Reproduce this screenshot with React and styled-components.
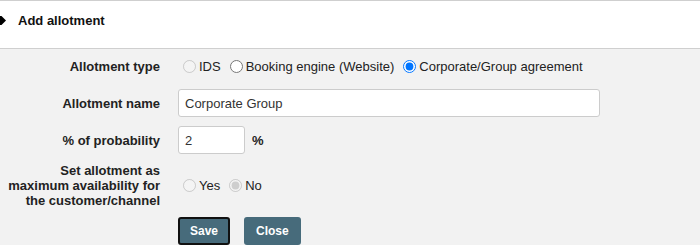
import React from 'react'
import styled, { createGlobalStyle } from 'styled-components'

const GlobalStyle = createGlobalStyle`
    html, body {
        margin: 0;
        padding: 0;
        background: #f2f2f2;
        font-family: "Liberation Sans", Arial, sans-serif;
        font-size: 13px;
        color: #222;
    }
`

const Header = styled.div`
    display: flex;
    align-items: center;
    gap: 12px;
    background: #fff;
    border-top: 1px solid #cfcfcf;
    border-bottom: 1px solid #cfcfcf;
    padding: 12px 0 20px 0;
`

const Title = styled.h3`
    margin: 0;
    font-size: 13px;
    line-height: 15px;
    font-weight: bold;
    color: #111;
`

const Form = styled.div`
    display: grid;
    grid-template-columns: 160px 1fr;
    column-gap: 18px;
    row-gap: 9px;
    align-items: center;
    padding-top: 3px;
`

const Label = styled.div`
    text-align: right;
    font-weight: bold;
    line-height: 15px;
    padding-left: 6px;
`

const Controls = styled.div`
    display: flex;
    align-items: center;
    gap: ${p => p.gap || 4}px;
    min-height: 28px;
    grid-column: ${p => (p.full ? '2' : 'auto')};
`

const Option = styled.label`
    display: inline-flex;
    align-items: center;
    line-height: 15px;
    color: #222;
    input {
        margin: 0 3px 0 5px;
        width: 13px;
        height: 13px;
    }
`

const TextInput = styled.input`
    box-sizing: border-box;
    width: ${p => p.w}px;
    height: 28px;
    border: 1px solid #cccccc;
    border-radius: 3px;
    padding: 0 6px;
    font-family: "Liberation Sans", Arial, sans-serif;
    font-size: 13px;
    color: #333;
    background: #fff;
    outline: none;
`

const Unit = styled.span`
    font-weight: bold;
`

const Button = styled.button`
    height: 28px;
    padding: 0 10px;
    background: #476b7b;
    color: #fff;
    font-family: "Liberation Sans", Arial, sans-serif;
    font-size: 12px;
    font-weight: bold;
    border: 2px solid ${p => (p.focused ? '#111' : '#476b7b')};
    border-radius: 3px;
    cursor: pointer;
`

const Arrow = () => (
    <svg width="6" height="9" viewBox="0 0 6 9">
        <polygon points="0,0 1.5,0 6,4.5 1.5,9 0,9" fill="#000" />
    </svg>
)

const App = () => {
    return (
        <div>
            <GlobalStyle />
            <Header>
                <Arrow />
                <Title>Add allotment</Title>
            </Header>
            <Form>
                <Label>Allotment type</Label>
                <Controls>
                    <Option><input type="radio" name="type" disabled />IDS</Option>
                    <Option><input type="radio" name="type" />Booking engine (Website)</Option>
                    <Option><input type="radio" name="type" defaultChecked />Corporate/Group agreement</Option>
                </Controls>

                <Label>Allotment name</Label>
                <Controls>
                    <TextInput w={422} defaultValue="Corporate Group" />
                </Controls>

                <Label>% of probability</Label>
                <Controls gap={7}>
                    <TextInput w={67} defaultValue="2" />
                    <Unit>%</Unit>
                </Controls>

                <Label>Set allotment as maximum availability for the customer/channel</Label>
                <Controls>
                    <Option><input type="radio" name="max" disabled />Yes</Option>
                    <Option><input type="radio" name="max" disabled defaultChecked />No</Option>
                </Controls>

                <Controls full gap={14}>
                    <Button focused>Save</Button>
                    <Button>Close</Button>
                </Controls>
            </Form>
        </div>
    )
}

export default App
